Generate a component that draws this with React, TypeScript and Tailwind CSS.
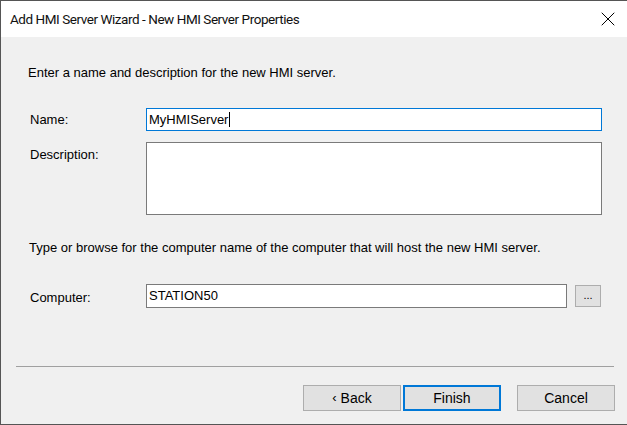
import { X } from 'lucide-react'

const ui = { fontFamily: '"Liberation Sans", Arial, sans-serif' }
const title = { fontFamily: 'Roboto, "Noto Sans", sans-serif' }

function WinButton({ label, primary }: { label: React.ReactNode; primary?: boolean }) {
  return (
    <div
      className={`flex h-[26px] w-[98px] items-center justify-center bg-[#e1e1e1] text-[14px] text-black ${
        primary ? 'border-2 border-[#0078d7]' : 'border border-[#adadad]'
      }`}
    >
      {label}
    </div>
  )
}

export default function App() {
  return (
    <div
      className="flex h-[425px] w-[627px] flex-col border-t border-b border-l border-[#555555] bg-[#f0f0f0] text-black"
      style={ui}
    >
      {/* Title bar */}
      <div className="flex h-[36px] shrink-0 items-center justify-between bg-white pl-[9px] pr-[7px]">
        <span className="text-[13.5px] tracking-[-0.45px] text-[#111]" style={title}>
          Add HMI Server Wizard - New HMI Server Properties
        </span>
        <X className="h-[24px] w-[24px] text-black" strokeWidth={1} />
      </div>

      {/* Body */}
      <div className="flex flex-1 flex-col px-[12px]">
        <div className="flex flex-col pl-[15px]">
          <div className="mt-[28px] h-[16px] text-[13px] leading-[16px]">
            Enter a name and description for the new HMI server.
          </div>

          <div className="mt-[27px] flex items-center">
            <div className="w-[118px] pl-[2px] text-[13px]">Name:</div>
            <div className="flex h-[23px] w-[456px] items-center border border-[#0078d7] bg-white pl-[2px] text-[13px]">
              MyHMIServer
              <span className="ml-px h-[15px] w-px bg-black" />
            </div>
          </div>

          <div className="mt-[11px] flex items-start">
            <div className="w-[118px] pl-[2px] pt-[5px] text-[13px] leading-[16px]">Description:</div>
            <div className="h-[73px] w-[456px] border border-[#7a7a7a] bg-white" />
          </div>

          <div className="mt-[25px] h-[16px] pl-[1px] text-[13px] leading-[16px]">
            Type or browse for the computer name of the computer that will host the new HMI server.
          </div>

          <div className="mt-[28px] flex items-center">
            <div className="w-[118px] pl-[2px] pt-[4px] text-[13px]">Computer:</div>
            <div className="flex h-[24px] w-[421px] items-center border border-[#7a7a7a] bg-white pl-[2px] text-[13px]">
              STATION50
            </div>
            <div className="ml-[8px] flex h-[22px] w-[26px] items-center justify-center border border-[#adadad] bg-[#e1e1e1] pb-[2px] text-[11px]">
              ...
            </div>
          </div>
        </div>

        <div className="ml-[3px] mt-[58px] h-px w-[598px] shrink-0 bg-[#a0a0a0]" />

        <div className="mt-[18px] flex justify-end">
          <WinButton
            label={
              <span className="flex items-center">
                <span className="mr-[4px] text-[13px]">‹</span>Back
              </span>
            }
          />
          <div className="ml-[2px]">
            <WinButton label="Finish" primary />
          </div>
          <div className="ml-[16px]">
            <WinButton label="Cancel" />
          </div>
        </div>
      </div>
    </div>
  )
}
